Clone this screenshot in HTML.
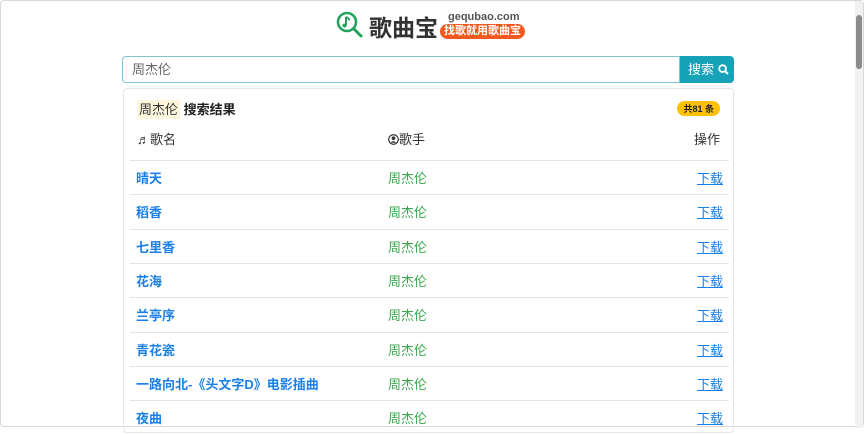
<!DOCTYPE html>
<html><head><meta charset="utf-8"><style>
*{box-sizing:border-box;margin:0;padding:0}
body{width:864px;height:427px;overflow:hidden;background:#fff;font-family:"Liberation Sans","Noto Sans CJK SC",sans-serif;position:relative;border:1px solid #d8d8d8;border-radius:4px}
.logo{position:absolute;left:335px;top:8px;height:32px}
.search{position:absolute;left:121px;top:55px;width:612px;height:27px;display:flex}
.search .in{flex:1;border:1px solid #7fc6d2;border-radius:4px 0 0 4px;font-size:13px;color:#666;padding:5px 9px;line-height:15px}
.search .bt{width:54px;background:#17a2b8;color:#fff;border-radius:0 4px 4px 0;font-size:13px;line-height:27px;padding-left:8px}
.card{position:absolute;left:122px;top:87px;width:611px;height:345px;border:1px solid #e6e6e6;border-radius:4px}
.hd{position:absolute;left:13px;top:10px;font-size:13px;font-weight:bold;color:#222}
.hl{background:#fdf6dd;font-weight:normal;padding:2px 2px;color:#333}
.badge{position:absolute;right:13px;top:12px;background:#ffc107;border-radius:8px;font-size:9px;font-weight:bold;padding:1px 6px;color:#222}
.th{position:absolute;top:40px;font-size:13px;color:#333}
.row{position:absolute;left:6px;width:599px;height:34.3px;border-top:1px solid #e4e4e4;font-size:13px}
.row span{position:absolute;top:7px}
.n{left:6px;color:#1a7fe6;font-weight:bold}
.s{left:258px;color:#3aa84e}
.d{right:6px;color:#1a7fe6;text-decoration:underline}
.sb{position:absolute;right:0;top:0;width:8px;height:427px;background:#f1f1f1}
.sb div{position:absolute;left:1px;top:14px;width:6px;height:54px;background:#8b8b8b;border-radius:3px}
</style></head><body>
<div class="logo">
<svg width="28" height="28" viewBox="0 0 28 28" style="position:absolute;left:0;top:2px"><circle cx="11" cy="11" r="9" fill="none" stroke="#22a45d" stroke-width="2.6"/><line x1="17.5" y1="17.5" x2="25" y2="25" stroke="#22a45d" stroke-width="3" stroke-linecap="round"/><path d="M10 6v8.5" stroke="#22a45d" stroke-width="2"/><circle cx="8.5" cy="14.5" r="2" fill="#22a45d"/><path d="M10 6q3 1 3.5 3.5" stroke="#22a45d" stroke-width="1.8" fill="none"/></svg>
<div style="position:absolute;left:33px;top:0px;font-size:23px;font-weight:bold;color:#333;white-space:nowrap">歌曲宝</div>
<div style="position:absolute;left:112px;top:2px;font-size:11px;font-weight:bold;color:#555">gequbao.com</div>
<div style="position:absolute;left:104px;top:15px;background:#f4581f;color:#fff;font-size:11px;font-weight:bold;border-radius:8px;padding:0 4px;white-space:nowrap;line-height:15px">找歌就用歌曲宝</div>
</div>
<div class="search"><div class="in">周杰伦</div><div class="bt">搜索 <svg width="11" height="11" viewBox="0 0 11 11" style="vertical-align:-1px"><circle cx="4.6" cy="4.6" r="3.4" fill="none" stroke="#fff" stroke-width="1.8"/><line x1="7.2" y1="7.2" x2="10" y2="10" stroke="#fff" stroke-width="2"/></svg></div></div>
<div class="card">
<div class="hd"><span class="hl">周杰伦</span> 搜索结果</div>
<div class="badge">共81 条</div>
<div class="th" style="left:13px">♬歌名</div>
<div class="th" style="left:264px"><svg width="11" height="11" viewBox="0 0 12 12" style="vertical-align:-1px"><circle cx="6" cy="6" r="5.2" fill="none" stroke="#333" stroke-width="1.3"/><circle cx="6" cy="4.6" r="2" fill="#333"/><path d="M2.6 9.6q3.4-3.6 6.8 0" fill="#333"/></svg>歌手</div>
<div class="th" style="right:13px">操作</div>
<div class="row" style="top:71px"><span class="n">晴天</span><span class="s">周杰伦</span><span class="d">下载</span></div>
<div class="row" style="top:105.3px"><span class="n">稻香</span><span class="s">周杰伦</span><span class="d">下载</span></div>
<div class="row" style="top:139.6px"><span class="n">七里香</span><span class="s">周杰伦</span><span class="d">下载</span></div>
<div class="row" style="top:173.9px"><span class="n">花海</span><span class="s">周杰伦</span><span class="d">下载</span></div>
<div class="row" style="top:208.2px"><span class="n">兰亭序</span><span class="s">周杰伦</span><span class="d">下载</span></div>
<div class="row" style="top:242.5px"><span class="n">青花瓷</span><span class="s">周杰伦</span><span class="d">下载</span></div>
<div class="row" style="top:276.8px"><span class="n">一路向北-《头文字D》电影插曲</span><span class="s">周杰伦</span><span class="d">下载</span></div>
<div class="row" style="top:311.1px"><span class="n">夜曲</span><span class="s">周杰伦</span><span class="d">下载</span></div>
</div>
<div class="sb"><div></div></div>
</body></html>
